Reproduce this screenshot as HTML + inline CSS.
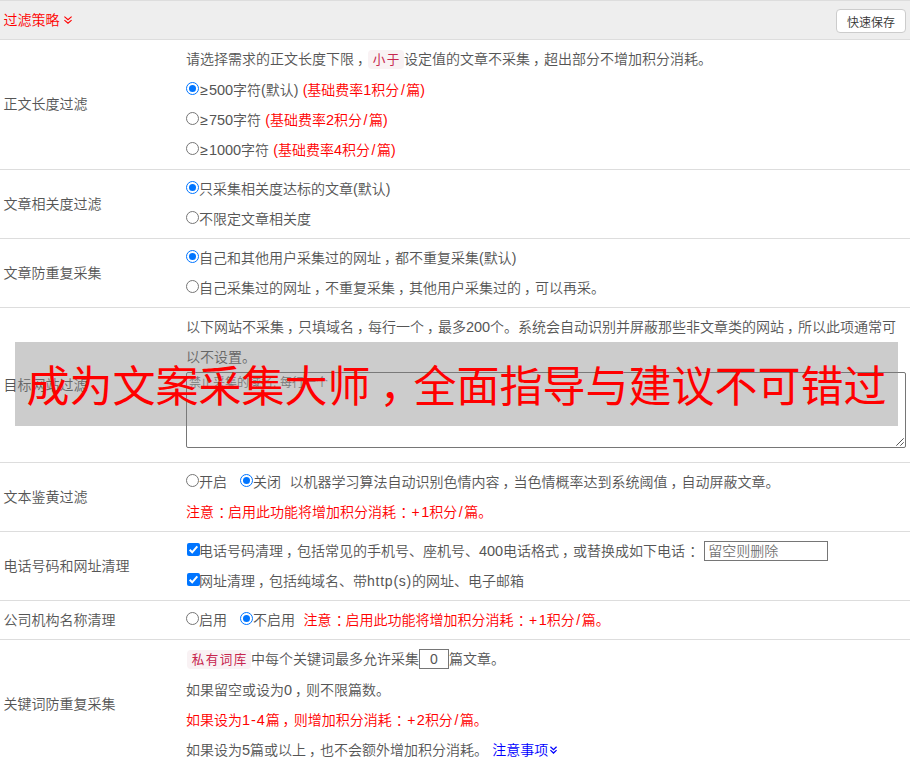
<!DOCTYPE html>
<html lang="zh-CN">
<head>
<meta charset="utf-8">
<title>过滤策略</title>
<style>
*{box-sizing:border-box;}
html,body{margin:0;padding:0;background:#fff;}
body{word-spacing:.4px;width:912px;height:768px;overflow:hidden;position:relative;
  font-family:"Liberation Sans","Noto Sans CJK SC",sans-serif;font-size:14px;color:#555;line-height:30px;font-weight:350;}
.hd{position:absolute;left:0;top:0;width:910px;height:40px;background:#eee;border-top:1px solid #ddd;border-bottom:1px solid #ddd;}
.hd .t{position:absolute;left:3.5px;top:4px;color:#f00;line-height:30px;}
.hd .btn{position:absolute;left:836px;top:8px;width:70px;height:24px;border:1px solid #ccc;border-radius:4px;background:#fff;color:#333;font-size:12px;line-height:26px;text-align:center;}
.chev{display:inline-block;vertical-align:1px;margin-left:0;}
table{position:absolute;left:0;top:40px;width:910px;border-collapse:collapse;border-spacing:0;}
td{white-space:nowrap;padding:4px 3px;border-bottom:1px solid #ddd;vertical-align:middle;line-height:30px;}
td.l{width:183px;padding-left:3.5px;}
td.l b{font-weight:inherit;position:relative;top:-1px;}
i{font-style:normal;}
i.n{font-size:14.5px;letter-spacing:-.05px;}
i.ge{display:inline-block;width:10px;text-align:center;}
i.sl{display:inline-block;width:7px;text-align:center;}
i.pl{display:inline-block;width:11.2px;text-align:center;}
i.g3{display:inline-block;width:13px;}
i.g2{display:inline-block;width:8.6px;}
i.co{position:relative;left:.3em;}
i.cm{position:relative;left:.21em;}
i.ht{letter-spacing:.76px;}
.red{color:#f00;}
.blue{color:#00f;}
.tag{background:#f9f2f4;color:#c7254e;border-radius:4px;padding:3px 3.3px 2px 4.7px;font-size:12.6px;letter-spacing:1.4px;font-weight:400;}
.rd{display:inline-block;width:13px;height:13px;border:1px solid #767676;border-radius:50%;vertical-align:0px;background:#fff;position:relative;margin:0;}
.rd.on{border-color:#0075ff;}
.rd.on:after{content:"";position:absolute;left:2px;top:2px;width:7px;height:7px;border-radius:50%;background:#0075ff;}
.cb{display:inline-block;width:13px;height:13px;border-radius:2px;background:#0075ff;vertical-align:0px;position:relative;margin:0 -1px 0 1px;}
.cb svg{position:absolute;left:0;top:0;}
.inp{display:inline-block;border:1px solid #767676;height:20px;line-height:18px;vertical-align:middle;background:#fff;color:#757575;padding:0 3px;position:relative;top:-1px;}
.inp.num{width:30px;text-align:center;color:#555;padding:0;}
.ta{display:block;width:720px;height:76px;margin:0 0 10px 0;border:1px solid #767676;border-radius:2px;background:#fff;color:#757575;font-size:12px;line-height:17px;padding:2px;position:relative;}
.ta svg{position:absolute;right:1px;bottom:1px;}
.ov{position:absolute;left:15px;top:342px;width:883px;height:84px;background:rgba(128,128,128,.4);color:#f00;font-size:43px;font-weight:400;line-height:78px;padding-top:6px;height:84px;text-align:center;white-space:nowrap;}
</style>
</head>
<body>
<div class="hd"><span class="t">过滤策略 <svg class="chev" width="8" height="8" viewBox="0 0 8 8"><path d="M0.4 0.6L4 3.7L7.6 0.6M0.4 4.1L4 7.2L7.6 4.1" stroke="#f00" stroke-width="1.1" fill="none"/></svg></span><span class="btn">快速保存</span></div>
<table>
<tr><td class="l"><b>正文长度过滤</b></td><td>
请选择需求的正文长度下限<i class="cm">，</i><span class="tag">小于</span>设定值的文章不采集<i class="cm">，</i>超出部分不增加积分消耗。<br>
<span class="rd on"></span><i class="ge">≥</i><i class="n">500</i>字符(默认) <span class="red">(基础费率<i class="n">1</i>积分<i class="sl">/</i>篇)</span><br>
<span class="rd"></span><i class="ge">≥</i><i class="n">750</i>字符 <span class="red">(基础费率<i class="n">2</i>积分<i class="sl">/</i>篇)</span><br>
<span class="rd"></span><i class="ge">≥</i><i class="n">1000</i>字符 <span class="red">(基础费率<i class="n">4</i>积分<i class="sl">/</i>篇)</span>
</td></tr>
<tr><td class="l">文章相关度过滤</td><td>
<span class="rd on"></span>只采集相关度达标的文章(默认)<br>
<span class="rd"></span>不限定文章相关度
</td></tr>
<tr><td class="l">文章防重复采集</td><td>
<span class="rd on"></span>自己和其他用户采集过的网址<i class="cm">，</i>都不重复采集(默认)<br>
<span class="rd"></span>自己采集过的网址<i class="cm">，</i>不重复采集<i class="cm">，</i>其他用户采集过的<i class="cm">，</i>可以再采。
</td></tr>
<tr><td class="l">目标网站过滤</td><td>
以下网站不采集<i class="cm">，</i>只填域名<i class="cm">，</i>每行一个<i class="cm">，</i>最多<i class="n">200</i>个。系统会自动识别并屏蔽那些非文章类的网站<i class="cm">，</i>所以此项通常可<br>以不设置。
<div class="ta">禁止采集的域名, 每行一个<svg width="8" height="8" viewBox="0 0 8 8"><path d="M0.3 7.7L7.7 0.3M4.3 7.7L7.7 4.3" stroke="#555" stroke-width="1" fill="none"/></svg></div>
</td></tr>
<tr><td class="l">文本鉴黄过滤</td><td>
<span class="rd"></span>开启<i class="g3"></i><span class="rd on"></span>关闭<i class="g2"></i>以机器学习算法自动识别色情内容<i class="cm">，</i>当色情概率达到系统阈值<i class="cm">，</i>自动屏蔽文章。<br>
<span class="red">注意<i class="co">：</i>启用此功能将增加积分消耗<i class="co">：</i><i class="pl">+</i><i class="n">1</i>积分<i class="sl">/</i>篇。</span>
</td></tr>
<tr><td class="l">电话号码和网址清理</td><td>
<span class="cb"><svg width="13" height="13" viewBox="0 0 13 13"><path d="M2.7 6.8L5.2 9.3L10.3 3.3" stroke="#fff" stroke-width="2" fill="none"/></svg></span>电话号码清理<i class="cm">，</i>包括常见的手机号、座机号、<i class="n">400</i>电话格式<i class="cm">，</i>或替换成如下电话<i class="co">：</i> <span class="inp" style="width:124px;margin-left:1px">留空则删除</span><br>
<span class="cb"><svg width="13" height="13" viewBox="0 0 13 13"><path d="M2.7 6.8L5.2 9.3L10.3 3.3" stroke="#fff" stroke-width="2" fill="none"/></svg></span>网址清理<i class="cm">，</i>包括纯域名、带<i class="ht">http(s)</i>的网址、电子邮箱
</td></tr>
<tr><td class="l">公司机构名称清理</td><td>
<span class="rd"></span>启用<i class="g3"></i><span class="rd on"></span>不启用<i class="g2"></i><span class="red">注意<i class="co">：</i>启用此功能将增加积分消耗<i class="co">：</i><i class="pl">+</i><i class="n">1</i>积分<i class="sl">/</i>篇。</span>
</td></tr>
<tr><td class="l"><b>关键词防重复采集</b></td><td>
<span class="tag" style="margin-left:1px">私有词库</span>中每个关键词最多允许采集<span class="inp num">0</span>篇文章。<br>
如果留空或设为<i class="n">0</i><i class="cm">，</i>则不限篇数。<br>
<span class="red">如果设为<i class="n" style="letter-spacing:.9px">1-4</i>篇<i class="cm">，</i>则增加积分消耗<i class="co">：</i><i class="pl">+</i><i class="n">2</i>积分<i class="sl">/</i>篇。</span><br>
如果设为<i class="n">5</i>篇或以上<i class="cm">，</i>也不会额外增加积分消耗。 <span class="blue">注意事项<svg class="chev" style="margin-left:2px" width="7" height="8" viewBox="0 0 7 8"><path d="M0.4 0.7L3.5 3.6L6.6 0.7M0.4 4.1L3.5 7L6.6 4.1" stroke="#00f" stroke-width="1.3" fill="none"/></svg></span>
</td></tr>
</table>
<div class="ov">成为文案采集大师<i class="cm">，</i>全面指导与建议不可错过</div>
</body>
</html>
